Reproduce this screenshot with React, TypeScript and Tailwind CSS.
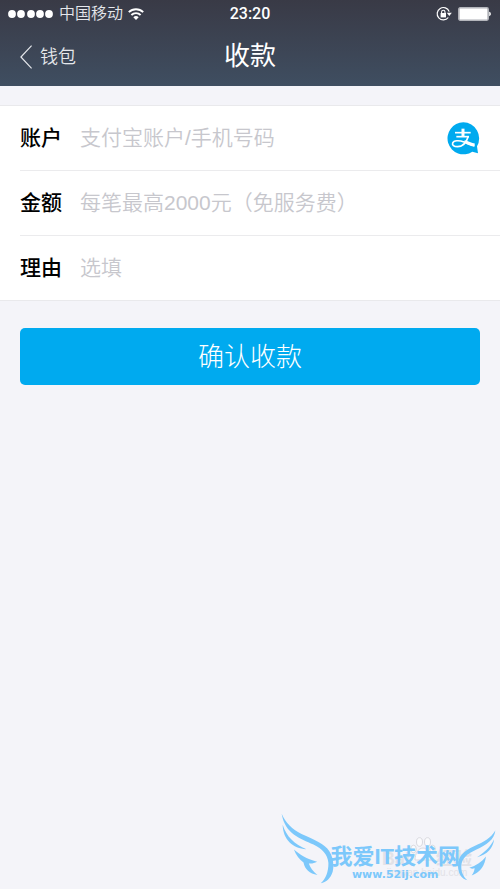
import { useState } from "react";

type Field = {
  id: string;
  label: string;
  placeholder: string;
  inputMode?: "text" | "decimal";
};

const FIELDS: Field[] = [
  { id: "account", label: "账户", placeholder: "支付宝账户/手机号码" },
  { id: "amount", label: "金额", placeholder: "每笔最高2000元（免服务费）", inputMode: "decimal" },
  { id: "reason", label: "理由", placeholder: "选填" },
];

const StatusBar = () => (
  <div className="grid grid-cols-3 items-center h-7 px-2 text-white">
    <div className="flex items-center gap-[5px]">
      <svg className="w-[46px] h-2" viewBox="0 0 46 8" fill="currentColor">
        {[4, 13, 23, 32, 41].map((cx) => (
          <circle key={cx} cx={cx} cy="4" r="3.9" />
        ))}
      </svg>
      <span className="text-[16px] leading-7 font-[350] text-gray-200 whitespace-nowrap">中国移动</span>
      <svg className="w-4 h-3" viewBox="0 0 16 12" fill="none" stroke="currentColor" strokeWidth="1.9">
        <path d="M0.8 4.2a10.2 10.2 0 0 1 14.4 0" />
        <path d="M3.4 7a6.5 6.5 0 0 1 9.2 0" />
        <path d="M8 12 5.3 9.3a3.8 3.8 0 0 1 5.4 0Z" fill="currentColor" stroke="none" />
      </svg>
    </div>
    <time className="text-center text-[16px] leading-7 font-medium font-['Roboto','Liberation_Sans',sans-serif]">23:20</time>
    <div className="flex items-center justify-end gap-[6px]">
      <svg className="w-4 h-4" viewBox="0 0 16 16" fill="none" stroke="currentColor">
        <path d="M13.2 5.6a6.2 6.2 0 1 0-0.9 5.9" strokeWidth="1.2" />
        <path d="M10.8 6.8h5l-2.5 3.2Z" fill="currentColor" stroke="none" />
        <rect x="4.6" y="7" width="5.4" height="4.4" fill="currentColor" stroke="none" />
        <path d="M5.6 7.4V6a1.7 1.7 0 0 1 3.4 0v1.4" strokeWidth="1.1" />
      </svg>
      <svg className="w-[34px] h-[14px]" viewBox="0 0 34 14">
        <rect x="0.6" y="0.6" width="29.8" height="12.8" rx="1.6" fill="none" stroke="#b4b6bc" strokeWidth="1.1" />
        <rect x="1.3" y="1.3" width="28.4" height="11.4" rx="0.6" fill="#fff" />
        <path d="M31.2 4.8c2.2.4 2.2 4 0 4.4Z" fill="#fff" />
      </svg>
    </div>
  </div>
);

const NavBar = () => (
  <div className="grid grid-cols-3 items-center h-[58px] px-5 text-white">
    <a href="#wallet" className="flex items-center gap-2 text-[18px] font-[350] text-gray-200">
      <svg className="w-3 h-6" viewBox="0 0 12 24" fill="none" stroke="currentColor" strokeWidth="1.2">
        <path d="M11.6 0.6 0.9 12l10.7 11.4" />
      </svg>
      钱包
    </a>
    <h1 className="pb-0.5 text-center text-[26px] leading-8">收款</h1>
  </div>
);

const AlipayIcon = () => (
  <svg className="w-[33px] h-[33px]" viewBox="0 0 99 99">
    <path d="M49 1a48 48 0 1 0 27 88l17 5-3-21A48 48 0 0 0 49 1Z" fill="#00aaef" />
    <g fill="none" stroke="#fff">
      <path d="M24 32h47" strokeWidth="5" />
      <path d="M48 20v23" strokeWidth="9" />
      <path d="M28 44h38" strokeWidth="5" />
      <path d="M64 43c-4 13-14 31-32 31-12 0-17-5-15-11 3-8 19-9 34-3 12 5 21 10 31 12" strokeWidth="5" />
      <path d="M52 59c11 3 21 9 31 10" strokeWidth="9" />
    </g>
  </svg>
);

const Watermark = () => (
  <div className="absolute right-1 bottom-1 flex items-end pointer-events-none" aria-hidden="true">
    <div className="absolute right-6 bottom-2 text-[#e2e2e7]">
      <div className="flex items-end text-[18px] leading-5 font-bold whitespace-nowrap">
        <span>Bai</span>
        <svg className="mb-2 w-[26px] h-6" viewBox="0 0 26 24" fill="#fbfbfd" stroke="#d9d9df" strokeWidth="1">
          <ellipse cx="3.5" cy="12" rx="2.8" ry="3.8" />
          <ellipse cx="9.5" cy="5" rx="3" ry="4.3" />
          <ellipse cx="17.5" cy="5" rx="3" ry="4.3" />
          <ellipse cx="22.5" cy="12" rx="2.8" ry="3.8" />
          <path d="M13 11c5 0 8 6 8 12H5c0-6 3-12 8-12Z" />
        </svg>
        <span>经验</span>
      </div>
      <div className="text-[10px] leading-2 text-center">jingyan.baidu.com</div>
    </div>
    <svg className="relative w-[53px] h-[73px]" viewBox="10 20 160 220" fill="#7cc8fb">
      <path d="M12 25C24 52 42 71 72 86c38 17 70 30 84 52 11 17 15 42 10 62-6 20-20 32-36 35 16-13 24-38 23-62-2-24-18-42-45-55C68 100 22 86 12 25Z" />
      <path d="M15 58c11 35 36 60 72 74C45 130 16 102 15 58Z" />
      <path d="M49 133c20 17 36 27 70 37-9 5-17 6-25 5 4 12 13 24 26 35-24-5-38-17-42-38-12-9-23-22-29-39Z" />
    </svg>
    <div className="relative -mx-1 pb-1 text-center text-[#7cc8fb] whitespace-nowrap">
      <div className="text-[22px] leading-6 font-bold">我爱IT技术网</div>
      <div className="text-[11px] leading-3 font-bold font-['DejaVu_Sans',sans-serif]">www.52ij.com</div>
    </div>
    <svg className="relative mb-1 w-10 h-[52px]" viewBox="255 10 120 155" fill="#7cc8fb">
      <path d="M373 14c-3 28-27 43-58 58-28 13-43 27-44 48-1 18 5 32 18 43-18-4-28-21-28-44 0-28 17-44 48-58 31-13 51-25 64-47Z" />
      <path d="M369 40c-2 26-20 46-51 54 22-14 40-30 51-54Z" />
      <path d="M345 92c-4 26-15 47-43 57 5-8 8-14 9-22-6 2-11 2-16-1 20-6 36-17 50-34Z" />
    </svg>
  </div>
);

const App = () => {
  const [values, setValues] = useState<Record<string, string>>({});

  return (
    <div className="relative min-h-screen bg-[#f4f4f9] font-['Liberation_Sans','Noto_Sans_CJK_SC',sans-serif]">
      <header className="bg-linear-to-b from-[#393a46] to-[#3f4e61]">
        <StatusBar />
        <NavBar />
      </header>

      <form onSubmit={(e) => e.preventDefault()}>
        <div className="mt-[19px] pl-5 bg-white border-y border-[#e9e9ec] divide-y divide-[#ebebed]">
          {FIELDS.map((field) => (
            <div key={field.id} className="flex items-center h-[65px] last:h-16 pr-5">
              <label htmlFor={field.id} className="w-[60px] shrink-0 text-[21px] font-medium text-black">
                {field.label}
              </label>
              <input
                id={field.id}
                type="text"
                inputMode={field.inputMode}
                placeholder={field.placeholder}
                value={values[field.id] ?? ""}
                onChange={(e) => setValues({ ...values, [field.id]: e.target.value })}
                className="flex-1 min-w-0 h-10 text-[21px] font-[350] text-black placeholder:text-[#c7c7cd] outline-none"
              />
              {field.id === "account" && (
                <button type="button" aria-label="选择支付宝账户">
                  <AlipayIcon />
                </button>
              )}
            </div>
          ))}
        </div>
        <div className="px-5 pt-[27px]">
          <button type="submit" className="w-full h-[57px] pt-0.5 rounded-[5px] bg-[#00aaef] text-[26px] font-light text-white">
            确认收款
          </button>
        </div>
      </form>

      <Watermark />
    </div>
  );
};

export default App;
